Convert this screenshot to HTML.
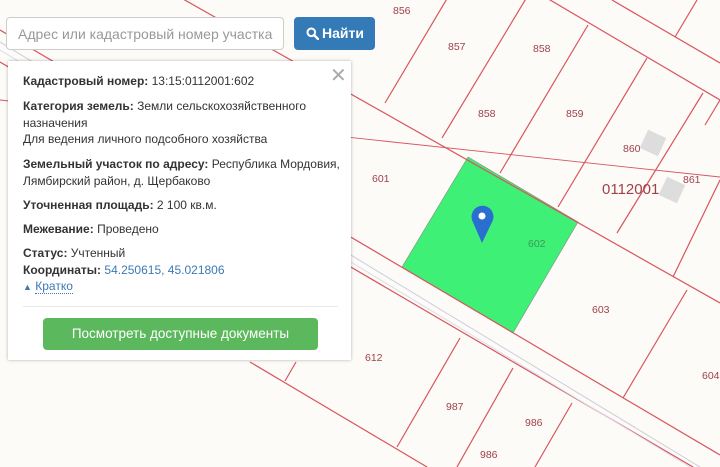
<!DOCTYPE html>
<html><head><meta charset="utf-8"><style>
body{margin:0;width:720px;height:467px;overflow:hidden;background:#fcfbf7;font-family:"Liberation Sans",sans-serif;position:relative}
svg.m{position:absolute;left:0;top:0}
.inp{position:absolute;left:6px;top:17px;width:278px;height:33px;border:1px solid #ccc;border-radius:4px;background:#fff;box-sizing:border-box;font-size:14px;color:#999;padding:8px 0 0 11px;white-space:nowrap;overflow:hidden}
.btn{position:absolute;left:294px;top:17px;width:81px;height:33px;background:#337ab7;border-radius:4px;color:#fff;font-size:14px;font-weight:bold;box-sizing:border-box;padding:8px 0 0 12px}
.btn svg{vertical-align:-2px;margin-right:3px}
.panel{position:absolute;left:8px;top:61px;width:343px;height:299px;background:#fff;box-shadow:0 0 3px rgba(0,0,0,.3);font-size:12px;color:#333}
.panel p{position:absolute;left:15px;margin:0;line-height:16.5px;white-space:nowrap}
b{color:#333}
.hr{position:absolute;left:15px;width:315px;top:245px;border-top:1px solid #e8e8e8}
.gb{position:absolute;left:35px;top:257px;width:275px;height:32px;background:#5cb85c;border-radius:4px;color:#fff;font-size:13.5px;text-align:center;line-height:32px}
.x{position:absolute;left:322px;top:2px;font-size:20px;color:#aaa}
.lb{position:absolute;font-size:10.5px;color:#a0404a}
</style></head><body>
<svg class="m" width="720" height="467">
<g stroke="#d9545e" stroke-width="1.2" fill="none">
<polygon points="468,157 578,222 513,333 402,267" fill="#3ef075" stroke="#888" stroke-width=".6"/>
<line x1="160" y1="-14" x2="720" y2="303"/>
<line x1="0" y1="100" x2="720" y2="177" stroke-width=".9"/>
<line x1="0" y1="30" x2="720" y2="455"/>
<line x1="0" y1="62" x2="693" y2="467"/>
<line x1="250" y1="362" x2="427" y2="467"/>
<line x1="545" y1="-3" x2="720" y2="100"/>
<line x1="612" y1="0" x2="720" y2="63"/>
<line x1="448" y1="-3" x2="385" y2="103"/>
<line x1="527" y1="-3" x2="442" y2="138"/>
<line x1="588" y1="25" x2="500" y2="173"/>
<line x1="647" y1="58" x2="558" y2="207"/>
<line x1="703" y1="93" x2="617" y2="233"/>
<line x1="697" y1="0" x2="675" y2="37"/>
<line x1="720" y1="180" x2="673" y2="277"/>
<line x1="687" y1="290" x2="623" y2="398"/>
<line x1="460" y1="338" x2="397" y2="447"/>
<line x1="513" y1="368" x2="457" y2="467"/>
<line x1="572" y1="403" x2="535" y2="467"/>
<line x1="296" y1="362" x2="285" y2="381"/>
<line x1="720" y1="100" x2="705" y2="125"/>
</g>
<line x1="0" y1="42" x2="700" y2="467" stroke="#ccd" stroke-width="1"/>
<line x1="0" y1="50" x2="690" y2="467" stroke="#dde" stroke-width="1"/>
<rect x="643" y="133" width="20" height="20" fill="#ddd" transform="rotate(25 653 143)"/>
<rect x="662" y="180" width="20" height="20" fill="#ddd" transform="rotate(25 672 190)"/>
<path d="M482 243 L472 220 A11 11 0 1 1 493 220 Z" fill="#2a6fd0"/>
<circle cx="482" cy="216" r="3.5" fill="#fff"/>
</svg>
<div class="lb" style="left:393px;top:5px">856</div>
<div class="lb" style="left:448px;top:41px">857</div>
<div class="lb" style="left:533px;top:43px">858</div>
<div class="lb" style="left:478px;top:108px">858</div>
<div class="lb" style="left:566px;top:108px">859</div>
<div class="lb" style="left:623px;top:143px">860</div>
<div class="lb" style="left:683px;top:174px">861</div>
<div class="lb" style="left:602px;top:181px;font-size:15px">0112001</div>
<div class="lb" style="left:372px;top:173px">601</div>
<div class="lb" style="left:528px;top:238px;color:#3a9a5a">602</div>
<div class="lb" style="left:592px;top:304px">603</div>
<div class="lb" style="left:365px;top:352px">612</div>
<div class="lb" style="left:446px;top:401px">987</div>
<div class="lb" style="left:525px;top:417px">986</div>
<div class="lb" style="left:480px;top:449px">986</div>
<div class="lb" style="left:702px;top:370px">604</div>
<div class="inp">Адрес или кадастровый номер участка</div>
<div class="btn"><svg width="13" height="13" viewBox="0 0 13 13"><circle cx="5.3" cy="5.3" r="3.8" fill="none" stroke="#fff" stroke-width="2"/><line x1="8" y1="8" x2="12" y2="12" stroke="#fff" stroke-width="2.4" stroke-linecap="round"/></svg>Найти</div>
<div class="panel">
<div class="x">✕</div>
<p style="top:12px"><b>Кадастровый номер:</b> 13:15:0112001:602</p>
<p style="top:37px"><b>Категория земель:</b> Земли сельскохозяйственного<br>назначения<br>Для ведения личного подсобного хозяйства</p>
<p style="top:95px"><b>Земельный участок по адресу:</b> Республика Мордовия,<br>Лямбирский район, д. Щербаково</p>
<p style="top:136px"><b>Уточненная площадь:</b> 2 100 кв.м.</p>
<p style="top:160px"><b>Межевание:</b> Проведено</p>
<p style="top:184px"><b>Статус:</b> Учтенный</p>
<p style="top:201px"><b>Координаты:</b> <span style="color:#3a7ab5">54.250615, 45.021806</span></p>
<p style="top:217px;color:#3a7ab5"><span style="font-size:9px">▲</span> <span style="border-bottom:1px dotted #3a7ab5">Кратко</span></p>
<div class="hr"></div>
<div class="gb">Посмотреть доступные документы</div>
</div>
</body></html>
